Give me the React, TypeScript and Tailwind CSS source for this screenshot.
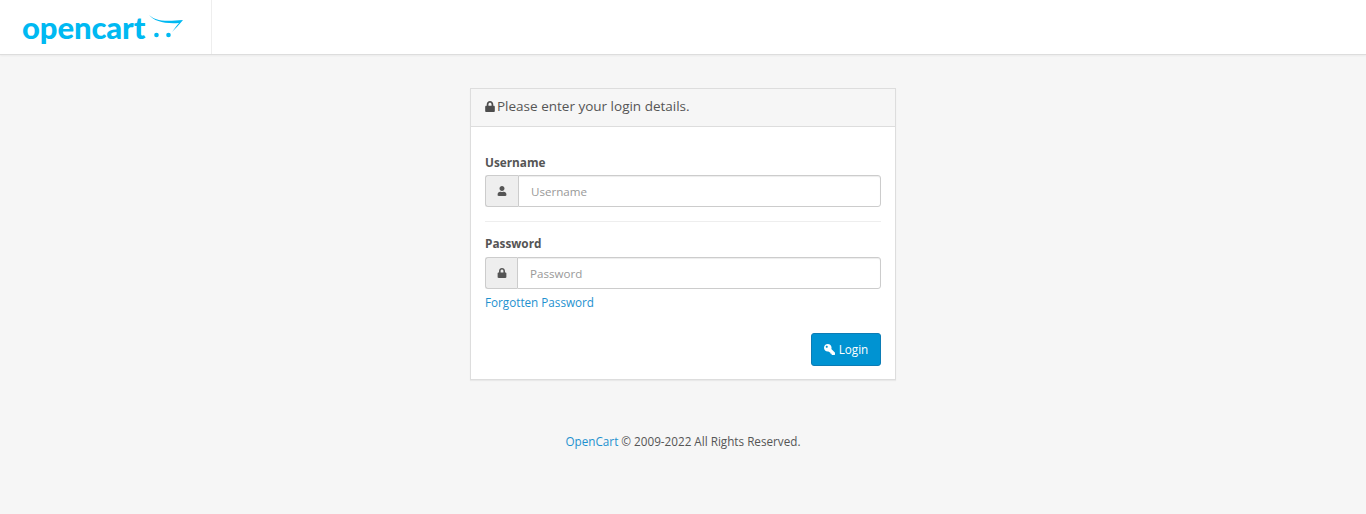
import { FaKey, FaLock, FaUser } from 'react-icons/fa';

function Logo() {
  return (
    <div className="flex h-[54px] w-[212px] items-start border-r border-[#eeeeee] pl-[22px]">
      <span className="mt-[8px] font-['Lato',sans-serif] text-[31px] leading-[38px] font-black tracking-[-0.1px] text-[#00b9f2]">
        opencart
      </span>
      <svg className="mt-[14px] ml-[2px]" width="38" height="30" viewBox="0 0 38 30">
        <path d="M2 1 C8 6 14 8 36 6 C32 11 28 15 25 18 C28 14 30 11 32 9 C17 10 7 7 2 1Z" fill="#00b9f2" />
        <circle cx="9.5" cy="21" r="2.3" fill="#00b9f2" />
        <circle cx="21.5" cy="21" r="2.3" fill="#00b9f2" />
      </svg>
    </div>
  );
}

type FieldProps = {
  label: string;
  addonWidth: string;
  labelGap: string;
  icon: React.ReactNode;
};

function Field({ label, addonWidth, labelGap, icon }: FieldProps) {
  return (
    <div>
      <label className={`block text-[11.8px] leading-[16px] font-bold text-[#555555] ${labelGap}`}>{label}</label>
      <div className="flex h-[32px]">
        <span className={`flex items-center justify-center rounded-l-[3px] border border-r-0 border-[#cccccc] bg-[#eeeeee] text-[#555555] ${addonWidth}`}>
          {icon}
        </span>
        <input
          placeholder={label}
          className="min-w-0 flex-1 rounded-r-[3px] border border-[#cccccc] bg-white px-[12px] pt-[2px] text-[11.6px] text-[#555555] shadow-[inset_0_1px_1px_rgba(0,0,0,0.075)] outline-none placeholder:text-[#999999]"
        />
      </div>
    </div>
  );
}

export default function App() {
  return (
    <div className="min-h-[514px] bg-[#f6f6f6] font-['Open_Sans',sans-serif] text-[12px] text-[#666666]">
      <header className="h-[55px] border-b border-[#dddddd] bg-white shadow-[0_1px_2px_rgba(0,0,0,0.05)]">
        <Logo />
      </header>

      <main className="mx-auto mt-[33px] w-[426px]">
        <section className="border border-[#dddddd] bg-white shadow-[0_1px_1px_rgba(0,0,0,0.05)]">
          <div className="flex h-[38px] items-center gap-[2px] border-b border-[#dddddd] bg-[#f6f6f6] px-[14px] pb-[2px] text-[13.5px] text-[#555555]">
            <FaLock className="h-[11px] w-[10px] text-[#4d4d4d]" />
            <h1 className="font-normal">Please enter your login details.</h1>
          </div>
          <form className="px-[14px] pt-[27px] pb-[13px]">
            <Field label="Username" addonWidth="w-[33px]" labelGap="mb-[5px]" icon={<FaUser className="h-[10px] w-[10px]" />} />
            <hr className="mt-[14px] mb-[13px] border-[#eeeeee]" />
            <Field label="Password" addonWidth="w-[32px]" labelGap="mb-[6px]" icon={<FaLock className="h-[10px] w-[10px]" />} />
            <a href="#" className="mt-[4px] block text-[11.7px] leading-[18px] text-[#1e91cf]">
              Forgotten Password
            </a>
            <div className="mt-[22px] flex justify-end">
              <button
                type="button"
                className="flex h-[33px] w-[70px] items-center justify-center gap-[4px] rounded-[3px] border border-[#0c7cb5] bg-[#0093d2] text-[11.7px] text-white"
              >
                <FaKey className="h-[11px] w-[11px] -scale-x-100" />
                Login
              </button>
            </div>
          </form>
        </section>
      </main>

      <footer className="mt-[52px] text-center text-[11.7px] leading-[18px] text-[#555555]">
        <a href="#" className="text-[#1e91cf]">OpenCart</a> © 2009-2022 All Rights Reserved.
      </footer>
    </div>
  );
}
